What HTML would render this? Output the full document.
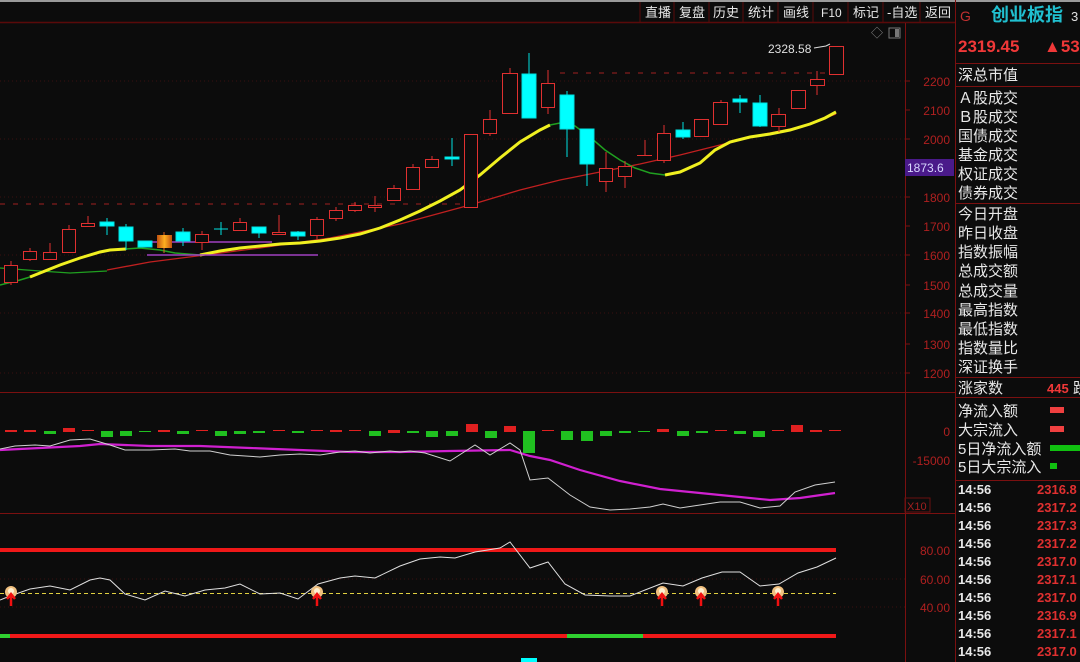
<!DOCTYPE html>
<html><head><meta charset="utf-8">
<style>
html,body{margin:0;padding:0;background:#0c0c0c;width:1080px;height:662px;overflow:hidden}
svg{display:block}
.cn{font-family:"Liberation Sans","Noto Sans CJK SC",sans-serif}
</style></head><body>
<svg width="1080" height="662" xmlns="http://www.w3.org/2000/svg" class="cn">
<rect width="1080" height="662" fill="#0c0c0c"/>
<rect width="1080" height="2" fill="#9a9a9a"/>
<!-- top bar -->
<line x1="0" y1="22.5" x2="955" y2="22.5" stroke="#5a0a0a" stroke-width="1.5"/>
<g fill="#e8e8e8" font-size="13">
<text x="645" y="17">直播</text><text x="679" y="17">复盘</text><text x="713" y="17">历史</text>
<text x="748" y="17">统计</text><text x="783" y="17">画线</text><text x="821" y="17" font-size="12">F10</text>
<text x="853" y="17">标记</text><text x="887" y="17">-自选</text><text x="925" y="17">返回</text>
</g>
<g stroke="#5a0a0a"><line x1="640" y1="2" x2="640" y2="22"/><line x1="674" y1="2" x2="674" y2="22"/><line x1="709" y1="2" x2="709" y2="22"/><line x1="743" y1="2" x2="743" y2="22"/><line x1="778" y1="2" x2="778" y2="22"/><line x1="813" y1="2" x2="813" y2="22"/><line x1="848" y1="2" x2="848" y2="22"/><line x1="883" y1="2" x2="883" y2="22"/><line x1="920" y1="2" x2="920" y2="22"/></g>
<!-- axis lines -->
<line x1="905.5" y1="23" x2="905.5" y2="662" stroke="#7a1010"/>
<line x1="955.5" y1="0" x2="955.5" y2="662" stroke="#7a1010"/>
<line x1="0" y1="392.5" x2="955" y2="392.5" stroke="#7a1010"/>
<line x1="0" y1="513.5" x2="955" y2="513.5" stroke="#7a1010"/>
<!-- grid dotted -->
<g stroke="#3a1010" stroke-dasharray="1 3">
<line x1="0" y1="81" x2="905" y2="81"/><line x1="0" y1="139" x2="905" y2="139"/><line x1="0" y1="197" x2="905" y2="197"/><line x1="0" y1="255" x2="905" y2="255"/><line x1="0" y1="313" x2="905" y2="313"/><line x1="0" y1="373" x2="905" y2="373"/>
<line x1="0" y1="579" x2="905" y2="579"/><line x1="0" y1="607" x2="905" y2="607"/>
</g>
<g stroke="#a02020" stroke-dasharray="5 8">
<line x1="0" y1="204" x2="470" y2="204"/><line x1="560" y1="73" x2="825" y2="73"/>
</g>
<!-- price labels -->
<g fill="#b02020" font-size="12" text-anchor="end">
<text x="950" y="86">2200</text><text x="950" y="115">2100</text><text x="950" y="144">2000</text><text x="950" y="202">1800</text><text x="950" y="231">1700</text><text x="950" y="260">1600</text><text x="950" y="290">1500</text><text x="950" y="318">1400</text><text x="950" y="349">1300</text><text x="950" y="378">1200</text>
<text x="950" y="436">0</text><text x="950" y="465">-15000</text>
<text x="950" y="555">80.00</text><text x="950" y="584">60.00</text><text x="950" y="612">40.00</text>
</g>
<g stroke="#7a1010"><line x1="905" y1="81" x2="910" y2="81"/><line x1="905" y1="110" x2="910" y2="110"/><line x1="905" y1="139" x2="910" y2="139"/><line x1="905" y1="197" x2="910" y2="197"/><line x1="905" y1="226" x2="910" y2="226"/><line x1="905" y1="255" x2="910" y2="255"/><line x1="905" y1="285" x2="910" y2="285"/><line x1="905" y1="313" x2="910" y2="313"/><line x1="905" y1="344" x2="910" y2="344"/><line x1="905" y1="373" x2="910" y2="373"/></g>
<rect x="905" y="498" width="25" height="14" fill="none" stroke="#6a1010"/>
<text x="907" y="510" fill="#a02020" font-size="11">X10</text>
<rect x="905" y="159" width="49" height="17" fill="#4a1a8a"/>
<text x="907" y="172" fill="#d8d8ff" font-size="12">1873.6</text>
<text x="768" y="53" fill="#e0e0e0" font-size="12">2328.58</text>
<path d="M814 48 L826 46 L830 44" stroke="#ddd" fill="none"/>
<text x="871" y="37" fill="#888" font-size="12">◇</text>
<rect x="889" y="28" width="11" height="10" fill="none" stroke="#777"/><rect x="895" y="29" width="4" height="8" fill="#777"/>
<!-- MAs -->
<polyline fill="none" stroke="#c02020" stroke-width="1.3" points="107,270 150,262 205,255 260,248 330,238 400,224 470,205 520,190 560,180 600,172 640,164 680,155 720,145 760,135 800,127 836,114"/>
<polyline fill="none" stroke="#20a020" stroke-width="1.3" points="0,268 40,271 70,273 107,271"/>
<polyline fill="none" stroke="#20a020" stroke-width="1.5" points="0,285 20,280 30,277"/>
<polyline fill="none" stroke="#f0f020" stroke-width="3" points="30,277 40,273 60,265 80,258 100,252 110,250 126,249"/>
<polyline fill="none" stroke="#20a020" stroke-width="1.5" points="126,249 140,248 160,250 175,253 200,255"/>
<polyline fill="none" stroke="#f0f020" stroke-width="3" points="200,255 220,251 240,248 260,246 280,244 300,243 320,241 340,238 360,234 380,228 400,220 420,211 440,201 460,190 480,175 500,158 520,142 540,130 550,125"/>
<polyline fill="none" stroke="#20a020" stroke-width="1.5" points="550,125 560,123 575,126 590,137 605,150 620,160 635,168 650,173 665,175"/>
<polyline fill="none" stroke="#f0f020" stroke-width="3" points="665,175 680,172 700,163 715,150 730,142 750,137 770,134 790,130 810,124 825,118 836,112"/>
<g stroke="#a040c0" stroke-width="1.5"><line x1="147" y1="242" x2="272" y2="242"/><line x1="147" y1="255" x2="318" y2="255"/></g>
<!-- candles -->
<g stroke="#e03030" fill="none" stroke-width="1">
<line x1="11" y1="261" x2="11" y2="285"/><rect x="4.5" y="265.5" width="13" height="17" fill="#0c0c0c"/>
<line x1="30" y1="248" x2="30" y2="261"/><rect x="23.5" y="251.5" width="13" height="8" fill="#0c0c0c"/>
<line x1="50" y1="243" x2="50" y2="260"/><rect x="43.5" y="252.5" width="13" height="7" fill="#0c0c0c"/>
<line x1="69" y1="225" x2="69" y2="252"/><rect x="62.5" y="229.5" width="13" height="23" fill="#0c0c0c"/>
<line x1="88" y1="216" x2="88" y2="227"/><rect x="81.5" y="223.5" width="13" height="3" fill="#0c0c0c"/>
<line x1="202" y1="231" x2="202" y2="250"/><rect x="195.5" y="234.5" width="13" height="8" fill="#0c0c0c"/>
<line x1="240" y1="218" x2="240" y2="230"/><rect x="233.5" y="222.5" width="13" height="8" fill="#0c0c0c"/>
<line x1="279" y1="215" x2="279" y2="235"/><rect x="272.5" y="232.5" width="13" height="2" fill="#0c0c0c"/>
<line x1="317" y1="217" x2="317" y2="240"/><rect x="310.5" y="219.5" width="13" height="16" fill="#0c0c0c"/>
<line x1="336" y1="207" x2="336" y2="221"/><rect x="329.5" y="210.5" width="13" height="8" fill="#0c0c0c"/>
<line x1="355" y1="202" x2="355" y2="212"/><rect x="348.5" y="205.5" width="13" height="5" fill="#0c0c0c"/>
<line x1="375" y1="196" x2="375" y2="212"/><rect x="368.5" y="205.5" width="13" height="2" fill="#0c0c0c"/>
<line x1="394" y1="185" x2="394" y2="200"/><rect x="387.5" y="188.5" width="13" height="12" fill="#0c0c0c"/>
<line x1="413" y1="164" x2="413" y2="190"/><rect x="406.5" y="167.5" width="13" height="22" fill="#0c0c0c"/>
<line x1="432" y1="156" x2="432" y2="168"/><rect x="425.5" y="159.5" width="13" height="8" fill="#0c0c0c"/>
<rect x="464.5" y="134.5" width="13" height="73" fill="#0c0c0c"/>
<line x1="490" y1="110" x2="490" y2="136"/><rect x="483.5" y="119.5" width="13" height="14" fill="#0c0c0c"/>
<line x1="510" y1="68" x2="510" y2="113"/><rect x="502.5" y="73.5" width="15" height="40" fill="#0c0c0c"/>
<line x1="548" y1="70" x2="548" y2="114"/><rect x="541.5" y="83.5" width="13" height="24" fill="#0c0c0c"/>
<line x1="606" y1="152" x2="606" y2="192"/><rect x="599.5" y="168.5" width="13" height="13" fill="#0c0c0c"/>
<line x1="625" y1="161" x2="625" y2="188"/><rect x="618.5" y="166.5" width="13" height="10" fill="#0c0c0c"/>
<line x1="645" y1="140" x2="645" y2="155"/><line x1="637" y1="155.5" x2="652" y2="155.5"/>
<line x1="664" y1="125" x2="664" y2="163"/><rect x="657.5" y="133.5" width="13" height="27" fill="#0c0c0c"/>
<rect x="694.5" y="119.5" width="14" height="17" fill="#0c0c0c"/>
<line x1="721" y1="100" x2="721" y2="124"/><rect x="713.5" y="102.5" width="14" height="22" fill="#0c0c0c"/>
<line x1="779" y1="108" x2="779" y2="132"/><rect x="771.5" y="114.5" width="14" height="12" fill="#0c0c0c"/>
<rect x="791.5" y="90.5" width="14" height="18" fill="#0c0c0c"/>
<line x1="817" y1="71" x2="817" y2="95"/><rect x="810.5" y="79.5" width="14" height="6" fill="#0c0c0c"/>
<rect x="829.5" y="46.5" width="14" height="28" fill="#0c0c0c"/>
</g>
<g fill="#00ffff" stroke="#00e0e0">
<line x1="107" y1="218" x2="107" y2="235"/><rect x="100" y="222" width="14" height="4"/>
<line x1="126" y1="224" x2="126" y2="250"/><rect x="119" y="227" width="14" height="14"/>
<rect x="138" y="241" width="14" height="6"/>
<line x1="183" y1="228" x2="183" y2="246"/><rect x="176" y="232" width="14" height="9"/>
<line x1="221" y1="222" x2="221" y2="235"/><line x1="214" y1="229" x2="228" y2="229"/>
<line x1="259" y1="227" x2="259" y2="238"/><rect x="252" y="227" width="14" height="6"/>
<line x1="298" y1="231" x2="298" y2="240"/><rect x="291" y="232" width="14" height="4"/>
<line x1="452" y1="138" x2="452" y2="166"/><rect x="445" y="157" width="14" height="2"/>
<line x1="529" y1="53" x2="529" y2="118"/><rect x="522" y="74" width="14" height="44"/>
<line x1="567" y1="91" x2="567" y2="157"/><rect x="560" y="95" width="14" height="34"/>
<line x1="587" y1="129" x2="587" y2="186"/><rect x="580" y="129" width="14" height="35"/>
<line x1="683" y1="122" x2="683" y2="139"/><rect x="676" y="130" width="14" height="7"/>
<line x1="740" y1="95" x2="740" y2="113"/><rect x="733" y="99" width="14" height="3"/>
<line x1="760" y1="95" x2="760" y2="127"/><rect x="753" y="103" width="14" height="23"/>
</g>
<defs><linearGradient id="og" x1="0" x2="1"><stop offset="0" stop-color="#c05010"/><stop offset=".5" stop-color="#ffb020"/><stop offset="1" stop-color="#c05010"/></linearGradient></defs>
<line x1="164" y1="232" x2="164" y2="253" stroke="#e06020"/><rect x="157" y="235" width="15" height="13" fill="url(#og)"/>
<!-- indicator 1 bars -->
<g>
<rect x="5" y="430" width="12" height="2" fill="#e02020"/><rect x="24" y="430" width="12" height="2" fill="#e02020"/><rect x="44" y="431" width="12" height="3" fill="#20c020"/><rect x="63" y="428" width="12" height="4" fill="#e02020"/><rect x="82" y="430" width="12" height="1" fill="#e02020"/><rect x="101" y="431" width="12" height="6" fill="#20c020"/><rect x="120" y="431" width="12" height="5" fill="#20c020"/><rect x="139" y="431" width="12" height="1" fill="#20c020"/><rect x="158" y="430" width="12" height="2" fill="#e02020"/><rect x="177" y="431" width="12" height="3" fill="#20c020"/><rect x="196" y="430" width="12" height="1" fill="#e02020"/><rect x="215" y="431" width="12" height="5" fill="#20c020"/><rect x="234" y="431" width="12" height="3" fill="#20c020"/><rect x="253" y="431" width="12" height="2" fill="#20c020"/><rect x="273" y="430" width="12" height="1" fill="#e02020"/><rect x="292" y="431" width="12" height="2" fill="#20c020"/><rect x="311" y="430" width="12" height="1" fill="#e02020"/><rect x="330" y="430" width="12" height="2" fill="#e02020"/><rect x="349" y="430" width="12" height="1" fill="#e02020"/><rect x="369" y="431" width="12" height="5" fill="#20c020"/><rect x="388" y="430" width="12" height="3" fill="#e02020"/><rect x="407" y="431" width="12" height="2" fill="#20c020"/><rect x="426" y="431" width="12" height="6" fill="#20c020"/><rect x="446" y="431" width="12" height="5" fill="#20c020"/><rect x="466" y="424" width="12" height="8" fill="#e02020"/><rect x="485" y="431" width="12" height="7" fill="#20c020"/><rect x="504" y="426" width="12" height="6" fill="#e02020"/><rect x="523" y="431" width="12" height="22" fill="#20c020"/><rect x="542" y="430" width="12" height="1" fill="#e02020"/><rect x="561" y="431" width="12" height="9" fill="#20c020"/><rect x="581" y="431" width="12" height="10" fill="#20c020"/><rect x="600" y="431" width="12" height="5" fill="#20c020"/><rect x="619" y="431" width="12" height="2" fill="#20c020"/><rect x="638" y="431" width="12" height="1" fill="#20c020"/><rect x="657" y="429" width="12" height="3" fill="#e02020"/><rect x="677" y="431" width="12" height="5" fill="#20c020"/><rect x="696" y="431" width="12" height="2" fill="#20c020"/><rect x="715" y="430" width="12" height="1" fill="#e02020"/><rect x="734" y="431" width="12" height="3" fill="#20c020"/><rect x="753" y="431" width="12" height="6" fill="#20c020"/><rect x="772" y="430" width="12" height="1" fill="#e02020"/><rect x="791" y="425" width="12" height="7" fill="#e02020"/><rect x="810" y="430" width="12" height="2" fill="#e02020"/><rect x="829" y="430" width="12" height="1" fill="#e02020"/>
</g>
<polyline fill="none" stroke="#d020d0" stroke-width="2.2" points="0,450 40,448 80,446 100,444 150,446 200,446 250,448 300,450 350,452 400,452 450,451 510,450 530,456 550,460 580,470 620,481 660,489 700,493 740,497 770,500 800,498 835,493"/>
<polyline fill="none" stroke="#d0d0d0" stroke-width="1" points="0,449 15,446 35,445 50,446 70,440 90,439 100,442 110,445 125,450 150,450 175,449 190,451 210,451 230,455 260,457 280,455 300,454 320,455 340,452 355,451 370,453 390,451 400,452 410,451 425,453 450,461 475,445 490,455 510,443 520,450 530,480 548,478 570,495 590,507 610,510 630,509 650,507 663,504 680,508 700,505 720,502 740,502 760,508 780,506 795,492 815,485 835,482"/>
<!-- indicator 2 -->
<rect x="0" y="548" width="836" height="4" fill="#f01818"/>
<line x1="0" y1="593.5" x2="836" y2="593.5" stroke="#e0d040" stroke-dasharray="4 3"/>
<polyline fill="none" stroke="#e0e0e0" stroke-width="1" points="0,600 10,596 30,589 50,586 70,590 90,580 100,578 110,580 125,594 145,600 165,591 185,596 205,590 225,588 240,584 260,594 280,593 298,599 318,584 340,578 355,576 375,578 400,566 420,559 440,557 455,558 475,552 500,548 510,542 530,568 548,562 565,584 585,595 610,596 630,596 645,590 663,583 683,586 702,578 722,572 740,572 760,586 779,584 798,573 817,567 836,558"/>
<rect x="0" y="634" width="836" height="4" fill="#f01818"/>
<rect x="0" y="634" width="10" height="4" fill="#30d030"/><rect x="567" y="634" width="76" height="4" fill="#30d030"/>
<rect x="521" y="658" width="16" height="4" fill="#00ffff"/>
<g id="mk">
<ellipse cx="11" cy="592" rx="6" ry="6" fill="#f0c080"/><ellipse cx="11" cy="591" rx="3" ry="3" fill="#fff0d0"/>
<path d="M11 606 L11 595 M7 599 L11 594 L15 599" stroke="#f01010" stroke-width="2.5" fill="none"/>
</g>
<use href="#mk" x="306"/><use href="#mk" x="651"/><use href="#mk" x="690"/><use href="#mk" x="767"/>
<!-- right panel -->
<g stroke="#7a1010">
<line x1="955" y1="63.5" x2="1080" y2="63.5"/><line x1="955" y1="86.5" x2="1080" y2="86.5"/><line x1="955" y1="203.5" x2="1080" y2="203.5"/><line x1="955" y1="377.5" x2="1080" y2="377.5"/><line x1="955" y1="397.5" x2="1080" y2="397.5"/><line x1="955" y1="480.5" x2="1080" y2="480.5"/>
</g>
<text x="960" y="21" fill="#c03030" font-size="14">G</text>
<text x="991" y="21" fill="#20c0d0" font-size="18" font-weight="bold">创业板指</text>
<text x="1071" y="21" fill="#e0e0e0" font-size="13">3</text>
<text x="958" y="52" fill="#f03838" font-size="17" font-weight="bold">2319.45</text>
<text x="1044" y="52" fill="#f03838" font-size="17" font-weight="bold">▲53</text>
<g fill="#e8e8e8" font-size="15">
<text x="958" y="80">深总市值</text>
<text x="958" y="103">Ａ股成交</text><text x="958" y="122">Ｂ股成交</text><text x="958" y="141">国债成交</text><text x="958" y="160">基金成交</text><text x="958" y="179">权证成交</text><text x="958" y="198">债券成交</text>
<text x="958" y="219">今日开盘</text><text x="958" y="238">昨日收盘</text><text x="958" y="257">指数振幅</text><text x="958" y="276">总成交额</text><text x="958" y="296">总成交量</text><text x="958" y="315">最高指数</text><text x="958" y="334">最低指数</text><text x="958" y="353">指数量比</text><text x="958" y="372">深证换手</text>
<text x="958" y="393">涨家数</text>
<text x="958" y="416">净流入额</text><text x="958" y="435">大宗流入</text><text x="958" y="454">5日净流入额</text><text x="958" y="472">5日大宗流入</text>
</g>
<text x="1047" y="393" fill="#f03838" font-size="13" font-weight="bold">445</text>
<text x="1073" y="393" fill="#e8e8e8" font-size="15">跌</text>
<rect x="1050" y="407" width="14" height="6" fill="#f04040"/><rect x="1050" y="426" width="14" height="6" fill="#f04040"/><rect x="1050" y="445" width="30" height="6" fill="#10c010"/><rect x="1050" y="463" width="7" height="6" fill="#10c010"/>
<g fill="#e8e8e8" font-size="13" font-weight="bold">
<text x="958" y="494">14:56</text><text x="958" y="512">14:56</text><text x="958" y="530">14:56</text><text x="958" y="548">14:56</text><text x="958" y="566">14:56</text><text x="958" y="584">14:56</text><text x="958" y="602">14:56</text><text x="958" y="620">14:56</text><text x="958" y="638">14:56</text><text x="958" y="656">14:56</text>
</g>
<g fill="#e03030" font-size="13" font-weight="bold">
<text x="1037" y="494">2316.8</text><text x="1037" y="512">2317.2</text><text x="1037" y="530">2317.3</text><text x="1037" y="548">2317.2</text><text x="1037" y="566">2317.0</text><text x="1037" y="584">2317.1</text><text x="1037" y="602">2317.0</text><text x="1037" y="620">2316.9</text><text x="1037" y="638">2317.1</text><text x="1037" y="656">2317.0</text>
</g>
</svg>
</body></html>
